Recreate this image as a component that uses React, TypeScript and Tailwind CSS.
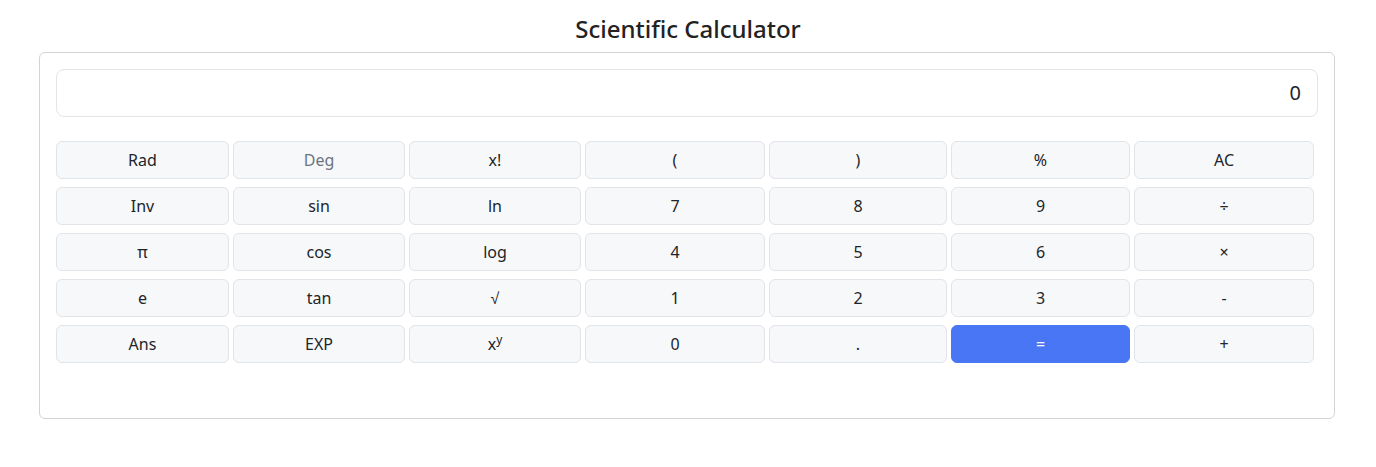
const rows: string[][] = [
  ["Rad", "Deg", "x!", "(", ")", "%", "AC"],
  ["Inv", "sin", "ln", "7", "8", "9", "÷"],
  ["π", "cos", "log", "4", "5", "6", "×"],
  ["e", "tan", "√", "1", "2", "3", "-"],
  ["Ans", "EXP", "xʸ", "0", ".", "=", "+"],
];

function CalcButton({ label }: { label: string }) {
  if (label === "=") {
    return (
      <button className="h-[38px] rounded-md bg-[#4876f5] border border-[#4876f5] text-white text-base">
        =
      </button>
    );
  }

  return (
    <button
      className={`h-[38px] rounded-md bg-[#f7f8fa] border border-[#e1e4e8] text-base ${
        label === "Deg" ? "text-[#6c757d]" : "text-[#212529]"
      }`}
    >
      {label === "xʸ" ? (
        <span>
          x<sup className="text-[12px]">y</sup>
        </span>
      ) : (
        label
      )}
    </button>
  );
}

export default function App() {
  return (
    <div className="min-h-screen bg-white pt-[13px] font-['Noto_Sans',sans-serif] text-[#212529]">
      <h1 className="text-center text-2xl leading-8 font-medium mb-[7px] text-[#222]">
        Scientific Calculator
      </h1>

      {/* CARD */}
      <div className="ml-[39px] w-[1296px] border border-[#d3d3d3] rounded-md p-4 pb-[55px]">
        {/* DISPLAY */}
        <div className="h-12 border border-[#e3e5e8] rounded-lg pr-4 flex items-center justify-end text-xl">
          0
        </div>

        {/* KEYPAD */}
        <div className="mt-6 grid grid-cols-[173px_172px_172px_180px_178px_179px_180px] gap-x-1 gap-y-2">
          {rows.flat().map((label, i) => (
            <CalcButton key={i} label={label} />
          ))}
        </div>
      </div>
    </div>
  );
}
